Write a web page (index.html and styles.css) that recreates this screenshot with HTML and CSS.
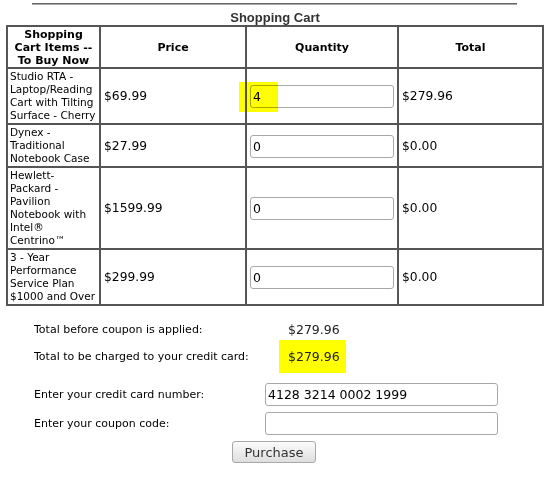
FILE: index.html
```html
<!DOCTYPE html>
<html lang="en">
<head>
    <meta charset="UTF-8">
    <title>Shopping Cart</title>
    <link rel="stylesheet" href="styles.css">
</head>
<body>
    <div class="rule"></div>
    <table class="cart">
        <caption>Shopping Cart</caption>
        <thead>
            <tr>
                <th class="c-item">Shopping<br>Cart Items --<br>To Buy Now</th>
                <th class="c-price">Price</th>
                <th class="c-qty">Quantity</th>
                <th class="c-total">Total</th>
            </tr>
        </thead>
        <tbody>
            <tr>
                <td class="item">Studio RTA -<br>Laptop/Reading<br>Cart with Tilting<br>Surface - Cherry</td>
                <td>$69.99</td>
                <td><span class="field"><input type="text" value="4"><span class="mark"></span></span></td>
                <td>$279.96</td>
            </tr>
            <tr>
                <td class="item">Dynex -<br>Traditional<br>Notebook Case</td>
                <td>$27.99</td>
                <td><span class="field"><input type="text" value="0"></span></td>
                <td>$0.00</td>
            </tr>
            <tr>
                <td class="item">Hewlett-<br>Packard -<br>Pavilion<br>Notebook with<br>Intel&reg;<br>Centrino&trade;</td>
                <td>$1599.99</td>
                <td><span class="field"><input type="text" value="0"></span></td>
                <td>$0.00</td>
            </tr>
            <tr>
                <td class="item">3 - Year<br>Performance<br>Service Plan<br>$1000 and Over</td>
                <td>$299.99</td>
                <td><span class="field"><input type="text" value="0"></span></td>
                <td>$0.00</td>
            </tr>
        </tbody>
    </table>

    <div class="summary">
        <div class="label">Total before coupon is applied:</div>
        <div class="value">$279.96</div>
        <div class="label">Total to be charged to your credit card:</div>
        <div class="value due">$279.96</div>
    </div>

    <form class="payment" onsubmit="return false;">
        <label for="card">Enter your credit card number:</label>
        <input type="text" id="card" value="4128 3214 0002 1999">
        <label for="coupon">Enter your coupon code:</label>
        <input type="text" id="coupon">
    </form>
    <div class="actions">
        <button type="button">Purchase</button>
    </div>
</body>
</html>
```

FILE: styles.css
```css
/* Shopping cart page */
body {
    margin: 0;
    font-family: 'DejaVu Sans', Verdana, sans-serif;
    font-size: 11px;
    color: #000;
    background: #fff;
}
.rule {
    width: 485px;
    margin: 3px 0 0 32px;
    border-top: 1px solid #666;
    border-bottom: 1px solid #aaa;
}
.cart {
    width: 538px;
    margin-left: 6px;
    border-collapse: separate;
    border-spacing: 0;
    table-layout: fixed;
}
.cart caption {
    font-family: 'Liberation Sans', Arial, sans-serif;
    font-size: 13px;
    font-weight: bold;
    line-height: 15px;
    color: #333;
    padding-top: 5px;
}
.cart th, .cart td {
    box-sizing: border-box;
    border-left: 2px solid #555;
    border-top: 2px solid #555;
    padding: 1px 3px 0;
    line-height: 13px;
    vertical-align: middle;
    text-align: left;
    font-size: 12.3px;
}
.cart th {
    font-size: 11px;
    font-weight: bold;
    text-align: center;
}
.cart th:last-child, .cart td:last-child {
    border-right: 2px solid #555;
}
.cart tbody tr:last-child td {
    border-bottom: 2px solid #555;
}
.cart .c-item { width: 93px; }
.cart .c-price { width: 146px; }
.cart .c-qty { width: 152px; }
.cart .c-total { width: 147px; }
.cart td.item {
    font-size: 10.5px;
    padding: 1px 1px 1px 2px;
    white-space: nowrap;
}
.field {
    position: relative;
    display: block;
}
.field input, .payment input {
    box-sizing: border-box;
    display: block;
    width: 100%;
    height: 23px;
    margin: 0;
    padding: 0 2px;
    border: 1px solid #a8a8a8;
    border-radius: 3px;
    font-family: 'DejaVu Sans', Verdana, sans-serif;
    font-size: 12.5px;
    color: #000;
    background: #fff;
}
.mark {
    position: absolute;
    left: -11px;
    top: -3px;
    width: 39px;
    height: 30px;
    background: #ffff00;
    mix-blend-mode: multiply;
}
.summary {
    display: grid;
    grid-template-columns: 245px max-content;
    grid-template-rows: 22px 33px;
    align-items: center;
    margin: 12px 0 0 34px;
}
.summary .value {
    font-size: 12.5px;
    padding-left: 9px;
    color: #222;
}
.summary .due {
    align-self: stretch;
    display: flex;
    align-items: center;
    width: 67px;
    box-sizing: border-box;
    background: #ffff00;
}
.payment {
    display: grid;
    grid-template-columns: 231px 233px;
    row-gap: 6px;
    align-items: center;
    margin: 10px 0 0 34px;
}
.actions {
    margin-top: 6px;
    text-align: center;
}
.actions button {
    height: 22px;
    padding: 0 11px;
    border: 1px solid #a8a8a8;
    border-radius: 3px;
    background: linear-gradient(#fbfbfb, #dedede);
    font-family: 'DejaVu Sans', Verdana, sans-serif;
    font-size: 13px;
    color: #333;
}
```
